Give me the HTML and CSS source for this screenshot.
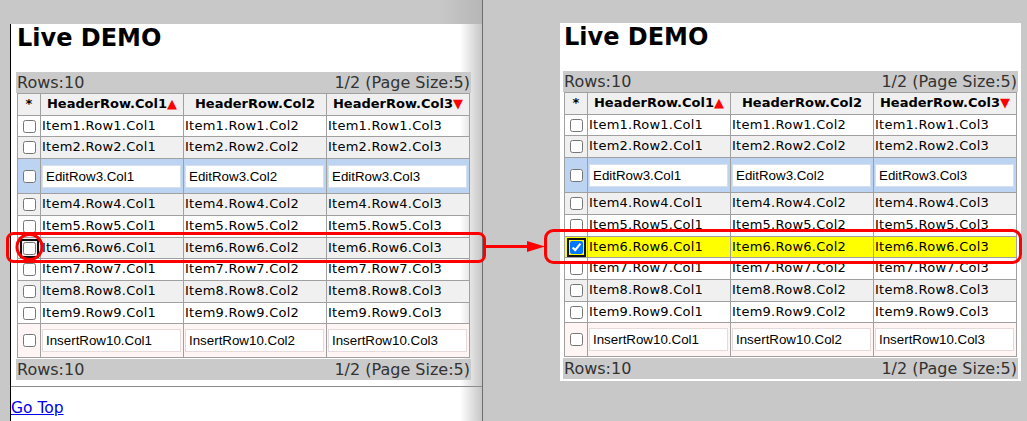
FILE: index.html
```html
<!DOCTYPE html>
<html lang="en">

<head>
    <meta charset="UTF-8">
    <meta name="viewport" content="width=device-width, initial-scale=1.0">
    <title>Live DEMO - row select</title>
    <link rel="stylesheet" href="styles.css">
</head>

<body>
    <div class="stage">

        <!-- before : left window -->
        <div class="win_left">
            <div class="page page_left">
                <h2 class="title">Live DEMO</h2>
                <div class="grid">
                    <div class="bar"><span>Rows:10</span><span>1/2 (Page Size:5)</span></div>
                    <table>
                        <colgroup>
                            <col class="c_chk">
                            <col class="c_col">
                            <col class="c_col">
                            <col class="c_col">
                        </colgroup>
                        <tr class="head">
                            <th>*</th>
                            <th>HeaderRow.Col1<span class="sort">▲</span></th>
                            <th>HeaderRow.Col2</th>
                            <th>HeaderRow.Col3<span class="sort">▼</span></th>
                        </tr>
                        <tr>
                            <td class="chk"><input type="checkbox"></td>
                            <td>Item1.Row1.Col1</td>
                            <td>Item1.Row1.Col2</td>
                            <td>Item1.Row1.Col3</td>
                        </tr>
                        <tr class="alt">
                            <td class="chk"><input type="checkbox"></td>
                            <td>Item2.Row2.Col1</td>
                            <td>Item2.Row2.Col2</td>
                            <td>Item2.Row2.Col3</td>
                        </tr>
                        <tr class="edit">
                            <td class="chk"><input type="checkbox"></td>
                            <td><input class="txt" type="text" value="EditRow3.Col1"></td>
                            <td><input class="txt" type="text" value="EditRow3.Col2"></td>
                            <td><input class="txt" type="text" value="EditRow3.Col3"></td>
                        </tr>
                        <tr class="alt">
                            <td class="chk"><input type="checkbox"></td>
                            <td>Item4.Row4.Col1</td>
                            <td>Item4.Row4.Col2</td>
                            <td>Item4.Row4.Col3</td>
                        </tr>
                        <tr>
                            <td class="chk"><input type="checkbox"></td>
                            <td>Item5.Row5.Col1</td>
                            <td>Item5.Row5.Col2</td>
                            <td>Item5.Row5.Col3</td>
                        </tr>
                        <tr class="alt">
                            <td class="chk"><input class="cb_focus" type="checkbox"></td>
                            <td>Item6.Row6.Col1</td>
                            <td>Item6.Row6.Col2</td>
                            <td>Item6.Row6.Col3</td>
                        </tr>
                        <tr>
                            <td class="chk"><input type="checkbox"></td>
                            <td>Item7.Row7.Col1</td>
                            <td>Item7.Row7.Col2</td>
                            <td>Item7.Row7.Col3</td>
                        </tr>
                        <tr class="alt">
                            <td class="chk"><input type="checkbox"></td>
                            <td>Item8.Row8.Col1</td>
                            <td>Item8.Row8.Col2</td>
                            <td>Item8.Row8.Col3</td>
                        </tr>
                        <tr>
                            <td class="chk"><input type="checkbox"></td>
                            <td>Item9.Row9.Col1</td>
                            <td>Item9.Row9.Col2</td>
                            <td>Item9.Row9.Col3</td>
                        </tr>
                        <tr class="insert">
                            <td class="chk"><input type="checkbox"></td>
                            <td><input class="txt" type="text" value="InsertRow10.Col1"></td>
                            <td><input class="txt" type="text" value="InsertRow10.Col2"></td>
                            <td><input class="txt" type="text" value="InsertRow10.Col3"></td>
                        </tr>
                    </table>
                    <div class="bar bar_foot"><span>Rows:10</span><span>1/2 (Page Size:5)</span></div>
                </div><!-- .grid end -->
                <hr class="line">
                <a class="go_top" href="#">Go Top</a>
            </div>
        </div><!-- .win_left end -->

        <!-- after : right window -->
        <div class="win_right">
            <div class="page page_right">
                <h2 class="title">Live DEMO</h2>
                <div class="grid">
                    <div class="bar"><span>Rows:10</span><span>1/2 (Page Size:5)</span></div>
                    <table>
                        <colgroup>
                            <col class="c_chk">
                            <col class="c_col">
                            <col class="c_col">
                            <col class="c_col">
                        </colgroup>
                        <tr class="head">
                            <th>*</th>
                            <th>HeaderRow.Col1<span class="sort">▲</span></th>
                            <th>HeaderRow.Col2</th>
                            <th>HeaderRow.Col3<span class="sort">▼</span></th>
                        </tr>
                        <tr>
                            <td class="chk"><input type="checkbox"></td>
                            <td>Item1.Row1.Col1</td>
                            <td>Item1.Row1.Col2</td>
                            <td>Item1.Row1.Col3</td>
                        </tr>
                        <tr class="alt">
                            <td class="chk"><input type="checkbox"></td>
                            <td>Item2.Row2.Col1</td>
                            <td>Item2.Row2.Col2</td>
                            <td>Item2.Row2.Col3</td>
                        </tr>
                        <tr class="edit">
                            <td class="chk"><input type="checkbox"></td>
                            <td><input class="txt" type="text" value="EditRow3.Col1"></td>
                            <td><input class="txt" type="text" value="EditRow3.Col2"></td>
                            <td><input class="txt" type="text" value="EditRow3.Col3"></td>
                        </tr>
                        <tr class="alt">
                            <td class="chk"><input type="checkbox"></td>
                            <td>Item4.Row4.Col1</td>
                            <td>Item4.Row4.Col2</td>
                            <td>Item4.Row4.Col3</td>
                        </tr>
                        <tr>
                            <td class="chk"><input type="checkbox"></td>
                            <td>Item5.Row5.Col1</td>
                            <td>Item5.Row5.Col2</td>
                            <td>Item5.Row5.Col3</td>
                        </tr>
                        <tr class="hit">
                            <td class="chk"><input class="cb_focus" type="checkbox" checked></td>
                            <td>Item6.Row6.Col1</td>
                            <td>Item6.Row6.Col2</td>
                            <td>Item6.Row6.Col3</td>
                        </tr>
                        <tr>
                            <td class="chk"><input type="checkbox"></td>
                            <td>Item7.Row7.Col1</td>
                            <td>Item7.Row7.Col2</td>
                            <td>Item7.Row7.Col3</td>
                        </tr>
                        <tr class="alt">
                            <td class="chk"><input type="checkbox"></td>
                            <td>Item8.Row8.Col1</td>
                            <td>Item8.Row8.Col2</td>
                            <td>Item8.Row8.Col3</td>
                        </tr>
                        <tr>
                            <td class="chk"><input type="checkbox"></td>
                            <td>Item9.Row9.Col1</td>
                            <td>Item9.Row9.Col2</td>
                            <td>Item9.Row9.Col3</td>
                        </tr>
                        <tr class="insert">
                            <td class="chk"><input type="checkbox"></td>
                            <td><input class="txt" type="text" value="InsertRow10.Col1"></td>
                            <td><input class="txt" type="text" value="InsertRow10.Col2"></td>
                            <td><input class="txt" type="text" value="InsertRow10.Col3"></td>
                        </tr>
                    </table>
                    <div class="bar bar_foot"><span>Rows:10</span><span>1/2 (Page Size:5)</span></div>
                </div><!-- .grid end -->
            </div>
        </div><!-- .win_right end -->

        <!-- red marks drawn over both windows -->
        <svg class="marks" width="1027" height="421" viewBox="0 0 1027 421">
            <rect x="7.5" y="233.5" width="477" height="28" rx="6" />
            <circle cx="29.5" cy="247" r="12.5" />
            <line x1="486" y1="246.5" x2="530" y2="246.5" />
            <polygon points="527,241 545,246.5 527,252" />
            <rect x="545.5" y="230.5" width="475" height="32" rx="8" />
        </svg>

    </div><!-- .stage end -->
</body>

</html>
```

FILE: styles.css
```css
* {
    margin: 0;
    padding: 0;
    box-sizing: border-box;
}

body {
    width: 1027px;
    height: 421px;
    overflow: hidden;
    background-color: #c8c8c8;
    font-family: "DejaVu Sans", Verdana, sans-serif;
    color: #000;
}

.stage {
    display: flex;
    height: 421px;
    position: relative;
}

/* left window (before) */
.win_left {
    width: 483px;
    height: 100%;
    padding: 20px 0 0 10px;
    border-right: 1px solid #6e6e6e;
    background: linear-gradient(to right, #c8c8c8 440px, #b6b6b6 482px);
}

.page_left {
    height: 100%;
    border-left: 1px solid #000;
    background: linear-gradient(to right, #fff 449px, #c6c6c6 471px);
}

.page_left .title {
    margin: 4.4px 0 19.6px 6px;
}

.page_left .grid {
    margin-left: 5px;
}

/* right window (after) */
.win_right {
    padding: 25px 0 0 77px;
}

.page_right {
    width: 461px;
    height: 358px;
    padding: 0 4px 0 3px;
    background-color: #fff;
}

.page_right .title {
    margin: -1.6px 0 19.6px 1px;
}

.title {
    font-size: 24px;
    line-height: 28px;
    font-weight: bold;
}

/* grid */
.grid {
    width: 455px;
}

.grid .bar {
    display: flex;
    justify-content: space-between;
    height: 21px;
    padding: 1px 1px 0;
    line-height: 20px;
    font-size: 16px;
    color: #333;
    background-color: #cacaca;
}

.grid .bar_foot {
    margin-top: 1px;
}

.grid table {
    width: 453px;
    margin: 0 1px;
    border-collapse: collapse;
    table-layout: fixed;
    font-size: 13px;
}

.grid col.c_chk {
    width: 23px;
}

.grid col.c_col {
    width: 143px;
}

.grid th,
.grid td {
    border: 1px solid #a0a0a0;
    padding: 3px 1px 3px 1px;
    line-height: 14.7px;
    white-space: nowrap;
    overflow: hidden;
    text-align: left;
}

.grid td {
    letter-spacing: 0.25px;
}

.grid th {
    text-align: center;
    background-color: #f0f0f0;
}

.grid th .sort {
    color: #f00;
    font-weight: normal;
}

.grid td.chk {
    padding: 0;
    text-align: center;
}

.grid input[type="checkbox"] {
    width: 13px;
    height: 13px;
    margin: 0;
    vertical-align: middle;
}

.grid .cb_focus {
    outline: 2px solid #101010;
    outline-offset: 1px;
}

.grid tr.alt td {
    background-color: #f0f0f0;
}

.grid tr.edit td {
    padding: 5.5px 1px;
    background-color: #bcd3f2;
}

.grid tr.insert td {
    padding: 5px 1px;
    background-color: #fff5f5;
}

.grid tr.hit td {
    background-color: #ff0;
}

.grid .txt {
    display: block;
    width: 139px;
    height: 23px;
    padding: 0 3px;
    border: 1px solid #d5e0ef;
    background-color: #fff;
    font-family: "Liberation Sans", Arial, sans-serif;
    font-size: 13.33px;
    color: #000;
    letter-spacing: 0;
}

.grid tr.insert .txt {
    border-color: #e6dada;
}

.line {
    margin-top: 6px;
    border: 0;
    border-top: 1px solid #8c8c8c;
}

.go_top {
    display: inline-block;
    margin-top: 12px;
    font-size: 15.5px;
    line-height: 18px;
    color: #0000ee;
}

/* annotation overlay */
.marks {
    position: absolute;
    left: 0;
    top: 0;
    pointer-events: none;
}

.marks rect,
.marks circle,
.marks line {
    fill: none;
    stroke: #f00;
    stroke-width: 3;
}

.marks polygon {
    fill: #f00;
}
```
